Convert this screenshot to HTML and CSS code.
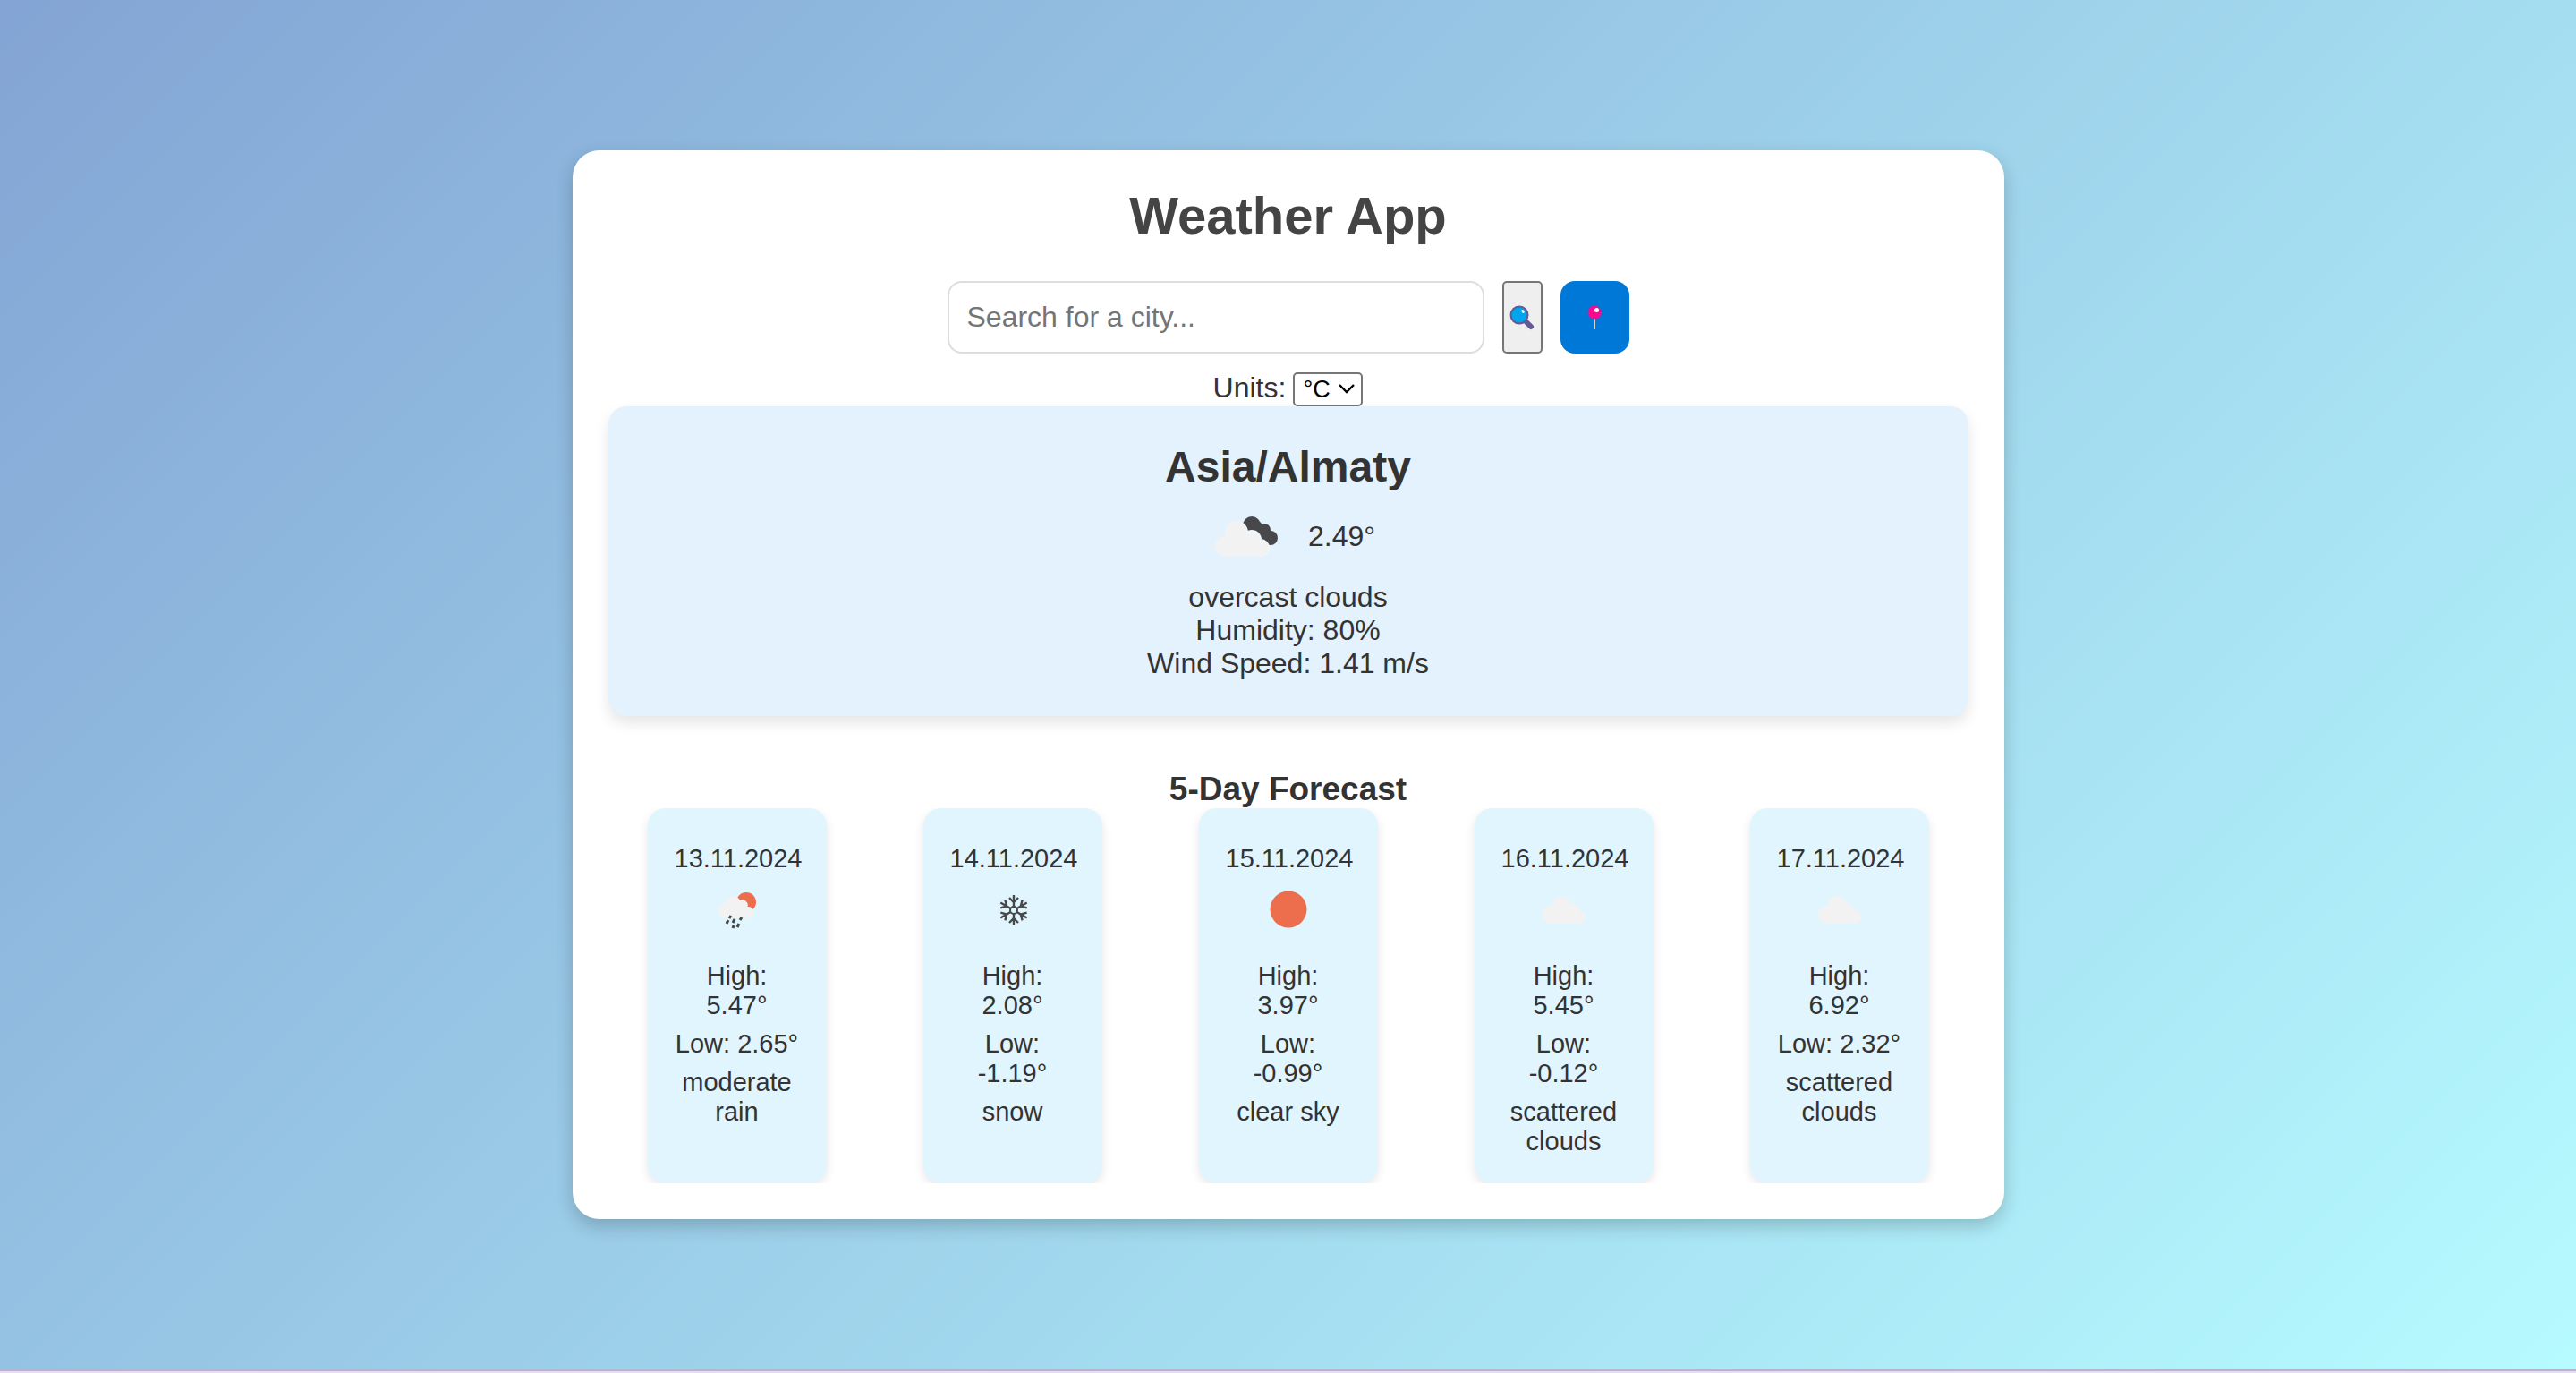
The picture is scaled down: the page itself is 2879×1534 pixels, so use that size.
FILE: index.html
```html
<!DOCTYPE html>
<html lang="en">
<head>
<meta charset="utf-8">
<title>Weather App</title>
<meta name="viewport" content="width=device-width, initial-scale=1">
<link rel="stylesheet" href="styles.css">
</head>
<body>
<svg class="defs" aria-hidden="true">
  <symbol id="cloud" viewBox="0 0 60 60">
    <path fill="#f2f2f2" d="M16 46a10 10 0 0 1 0-20h1a10 10 0 0 1 20-2a8 8 0 0 1 10 8a7 7 0 0 1 0 14z"/>
  </symbol>
  <symbol id="arm" viewBox="-20 -20 40 40">
    <path fill="none" stroke="#48484a" stroke-width="2.4" d="M0-4V-17M-5-14L0-9L5-14"/>
  </symbol>
</svg>
<main class="page">
  <div class="app">
    <h1 class="title">Weather App</h1>
    <form class="search">
      <input class="search-input" type="text" placeholder="Search for a city..." aria-label="City">
      <button class="search-button" type="button" aria-label="Search">
        <svg width="28" height="28" viewBox="0 0 28 28">
          <path d="M19 19l5 5" stroke="#635994" stroke-width="6" stroke-linecap="round"/>
          <circle cx="11" cy="11" r="9.500" fill="#00a6ed" stroke="#635994" stroke-width="2"/>
          <ellipse cx="15" cy="7" rx="1.5" ry="2" fill="#fff" transform="rotate(-35 15 7)"/>
        </svg>
      </button>
      <button class="locate-button" type="button" aria-label="Use my location">
        <svg width="28" height="28" viewBox="0 0 28 28">
          <path d="M14 13v14" stroke="#d3d3d3" stroke-width="2"/>
          <circle cx="14" cy="8" r="7.5" fill="#f8098e"/>
          <circle cx="16.5" cy="5.5" r="2.5" fill="#fff"/>
        </svg>
      </button>
    </form>
    <div class="units">
      <label for="units">Units:</label>
      <div class="select-wrap">
        <select id="units" class="select"><option>°C</option><option>°F</option></select>
        <svg class="chevron" width="18" height="12" viewBox="0 0 18 12"><path d="M1 2l8 8l8-8" fill="none" stroke="#000" stroke-width="2.4"/></svg>
      </div>
    </div>
    <section class="current">
      <h2 class="place">Asia/Almaty</h2>
      <div class="now">
        <svg width="100" height="100" viewBox="0 0 100 100" aria-hidden="true">
          <g fill="#48484a">
            <circle cx="57" cy="38" r="10"/>
            <circle cx="71" cy="43" r="7"/>
            <circle cx="78" cy="52" r="8"/>
            <path d="M50 45L66 34L82 50L74 60z"/>
          </g>
          <g fill="#eff5fa">
            <circle cx="40" cy="46" r="13"/>
            <circle cx="57" cy="54" r="11"/>
            <circle cx="67" cy="63" r="10"/>
          </g>
          <g fill="#f2f2f2">
            <circle cx="39" cy="46" r="12"/>
            <circle cx="56" cy="55" r="10"/>
            <circle cx="26" cy="61" r="10.500"/>
            <circle cx="67" cy="63" r="9"/>
            <path d="M27 46H50L67 60V72H26z"/>
          </g>
        </svg>
        <span>2.49°</span>
      </div>
      <p>overcast clouds</p>
      <p>Humidity: 80%</p>
      <p>Wind Speed: 1.41 m/s</p>
    </section>
    <h3 class="subtitle">5-Day Forecast</h3>
    <section class="forecast">
      <article class="day">
        <p>13.11.2024</p>
        <svg class="icon" viewBox="0 0 60 60" aria-hidden="true">
          <circle cx="40" cy="22" r="11" fill="#ed6e4c"/>
          <path fill="#f2f2f2" d="M16 39a8 8 0 0 1 1-16a8.500 8.500 0 0 1 16-3a6 6 0 0 1 8.500 7a6 6 0 0 1 2 12z"/>
          <path fill="none" stroke="#48484a" stroke-width="3" d="M23 37l-2 3M20 42l-2 4M27 41l-2 4M35 39l-2 3M26 48l-1 3M32 46l-2 4"/>
        </svg>
        <p>High: 5.47°</p>
        <p>Low: 2.65°</p>
        <p>moderate rain</p>
      </article>
      <article class="day">
        <p>14.11.2024</p>
        <svg class="icon" viewBox="-31 -31 60 60" aria-hidden="true">
          <circle r="4" fill="none" stroke="#48484a" stroke-width="2"/>
          <use href="#arm" x="-20" y="-20" width="40" height="40"/>
          <use href="#arm" x="-20" y="-20" width="40" height="40" transform="rotate(60)"/>
          <use href="#arm" x="-20" y="-20" width="40" height="40" transform="rotate(120)"/>
          <use href="#arm" x="-20" y="-20" width="40" height="40" transform="rotate(180)"/>
          <use href="#arm" x="-20" y="-20" width="40" height="40" transform="rotate(240)"/>
          <use href="#arm" x="-20" y="-20" width="40" height="40" transform="rotate(300)"/>
        </svg>
        <p>High: 2.08°</p>
        <p>Low: -1.19°</p>
        <p>snow</p>
      </article>
      <article class="day">
        <p>15.11.2024</p>
        <svg class="icon" viewBox="0 0 60 60" aria-hidden="true"><circle cx="30" cy="30" r="20.500" fill="#ed6e4c"/></svg>
        <p>High: 3.97°</p>
        <p>Low: -0.99°</p>
        <p>clear sky</p>
      </article>
      <article class="day">
        <p>16.11.2024</p>
        <svg class="icon" aria-hidden="true"><use href="#cloud"/></svg>
        <p>High: 5.45°</p>
        <p>Low: -0.12°</p>
        <p>scattered clouds</p>
      </article>
      <article class="day">
        <p>17.11.2024</p>
        <svg class="icon" aria-hidden="true"><use href="#cloud"/></svg>
        <p>High: 6.92°</p>
        <p>Low: 2.32°</p>
        <p>scattered clouds</p>
      </article>
    </section>
  </div>
</main>
<footer class="edge"></footer>
</body>
</html>
```
FILE: styles.css
```css
* { box-sizing: border-box; margin: 0; padding: 0; }

body {
  min-height: 100vh;
  display: flex;
  flex-direction: column;
  font-family: Arial, "Liberation Sans", sans-serif;
  font-size: 32px;
  line-height: 37px;
  color: #333;
}

.defs { position: absolute; width: 0; height: 0; }

.page {
  flex: 1;
  display: flex;
  justify-content: center;
  align-items: center;
  background: linear-gradient(135deg, #83a4d4, #b6fbff);
}

.edge { height: 4px; background: #e3def4; border-top: 2px solid #b9b4cb; }

.app {
  width: 100%;
  max-width: 1600px;
  padding: 40px;
  border-radius: 30px;
  background: #fff;
  box-shadow: 0 8px 20px rgba(0, 0, 0, 0.2);
  text-align: center;
}

.title { font-size: 58px; line-height: 66px; color: #444; margin-bottom: 40px; }

.search { display: flex; justify-content: center; gap: 20px; margin-bottom: 20px; }

.search-input {
  width: 600px;
  height: 81px;
  padding: 0 20px;
  border: 2px solid #ddd;
  border-radius: 16px;
  font: inherit;
  background: #fff;
}
.search-input::placeholder { color: #757575; }

.search-button, .locate-button { display: flex; align-items: center; justify-content: center; }
.search-button { width: 45px; border: 2px solid #767676; border-radius: 5px; background: #efefef; }
.locate-button { width: 77px; border: 0; border-radius: 16px; background: #0078d7; }

.units { display: flex; justify-content: center; align-items: flex-start; gap: 8px; }
.select-wrap { position: relative; display: flex; padding-top: 1px; }
.select {
  appearance: none;
  width: 78px;
  height: 38px;
  padding: 0 9px;
  border: 2px solid #767676;
  border-radius: 5px;
  background: #fff;
  color: #000;
  font-family: inherit;
  font-size: 27px;
}
.chevron { position: absolute; right: 9px; top: 13px; pointer-events: none; }

.current {
  padding: 40px;
  border-radius: 20px;
  background: #e3f2fd;
  box-shadow: 0 8px 16px rgba(0, 0, 0, 0.1);
  margin-bottom: 60px;
}
.place { font-size: 48px; line-height: 55px; }
.now { display: flex; justify-content: center; align-items: center; gap: 20px; }

.subtitle { font-size: 37px; line-height: 43px; }

.forecast { display: flex; justify-content: space-around; gap: 20px; overflow: hidden; }

.day {
  display: flex;
  flex-direction: column;
  gap: 10px;
  width: 200px;
  padding: 40px 30px 30px;
  border-radius: 20px;
  background: #e1f5fe;
  box-shadow: 0 4px 12px rgba(0, 0, 0, 0.1);
  font-size: 29px;
  line-height: 33px;
}
.icon { width: 60px; height: 60px; align-self: center; margin-bottom: 18px; }
```
